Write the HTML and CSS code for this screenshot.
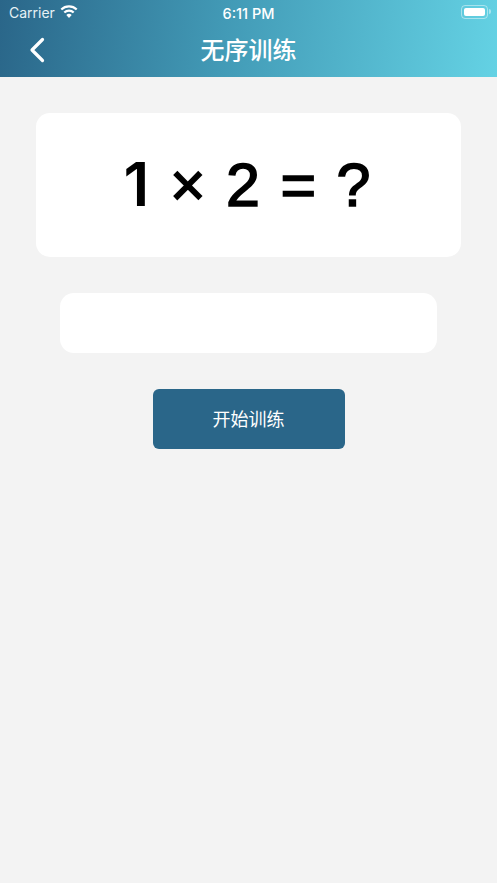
FILE: index.html
```html
<!DOCTYPE html>
<html lang="zh-CN">
<head>
    <meta charset="UTF-8">
    <meta name="viewport" content="width=device-width, initial-scale=1.0">
    <title>无序训练</title>
    <link rel="stylesheet" href="styles.css">
</head>
<body>
    <header class="top">
        <div class="status">
            <div class="status-left">
                <span class="carrier">Carrier</span>
                <svg class="wifi" viewBox="0 0 18 13" width="18" height="13">
                    <path d="M1.300 4.500a11 11 0 0 1 15.400 0" fill="none" stroke="#fff" stroke-width="2.200"/>
                    <path d="M4.300 7.500a6.800 6.800 0 0 1 9.400 0" fill="none" stroke="#fff" stroke-width="2.200"/>
                    <path d="M6.300 10.100a4 4 0 0 1 5.400 0L9 13z" fill="#fff"/>
                </svg>
            </div>
            <span class="time">6:11 PM</span>
            <div class="battery"><div class="battery-fill"></div></div>
        </div>
        <nav class="nav">
            <svg class="back" viewBox="0 0 16 26" width="16" height="26">
                <path d="M13.500 2.500 3 13l10.500 10.500" fill="none" stroke="#fff" stroke-width="3.200" stroke-linecap="round" stroke-linejoin="round"/>
            </svg>
            <h1>无序训练</h1>
        </nav>
    </header>

    <main class="content">
        <div class="question">
            <div class="equation"><span class="one">1</span> × 2 = ?</div>
        </div>
        <input class="answer" type="text">
        <button class="start">开始训练</button>
    </main>
</body>
</html>
```

FILE: styles.css
```css
* {
    box-sizing: border-box;
}
body {
    margin: 0;
    min-height: 883px;
    background-color: #f3f3f3;
    font-family: "Liberation Sans", "Noto Sans CJK SC", sans-serif;
}
.top {
    height: 77px;
    color: white;
    background: linear-gradient(97deg, #2a6689 0%, #429ab6 45%, #64d2e4 100%);
}
.status {
    height: 26px;
    padding: 0 9px;
    display: grid;
    grid-template-columns: 1fr auto 1fr;
    align-items: center;
    font-family: Inter, "Liberation Sans", sans-serif;
    font-size: 14.500px;
}
.status-left {
    display: flex;
    align-items: center;
    gap: 5px;
    font-size: 14px;
    color: #e6f1f5;
}
.carrier {
    margin-bottom: 2px;
}
.wifi {
    margin-top: -3px;
}
.time {
    font-weight: 500;
}
.battery {
    position: relative;
    justify-self: end;
    width: 27px;
    height: 14px;
    padding: 2px;
    border: 1px solid rgba(255, 255, 255, 0.45);
    border-radius: 4px;
    margin-top: -2px;
}
.battery::after {
    content: "";
    position: absolute;
    right: -4px;
    top: 3px;
    width: 2px;
    height: 5px;
    background-color: rgba(255, 255, 255, 0.45);
    border-radius: 0 2px 2px 0;
}
.battery-fill {
    height: 100%;
    background-color: white;
    border-radius: 2px;
}
.nav {
    height: 51px;
    display: flex;
    align-items: center;
    justify-content: center;
    position: relative;
}
.back {
    position: absolute;
    left: 29px;
    top: 11px;
}
.nav h1 {
    margin: 0 0 7px;
    font-size: 24px;
    font-weight: 500;
}
.content {
    display: flex;
    flex-direction: column;
    align-items: center;
    padding-top: 36px;
}
.question {
    width: 425px;
    height: 144px;
    background-color: white;
    border-radius: 14px;
    display: flex;
    align-items: center;
    justify-content: center;
    padding-right: 8px;
}
.equation {
    margin-bottom: 2px;
    font-size: 61px;
    line-height: 70px;
    word-spacing: 3.500px;
    color: black;
    -webkit-text-stroke: 1.600px black;
    white-space: nowrap;
}
.one {
    display: inline-block;
    width: 26px;
    margin-left: 5px;
    font-family: Inter, "Liberation Sans", sans-serif;
    font-weight: 600;
    -webkit-text-stroke: 0;
}
.answer {
    width: 377px;
    height: 60px;
    margin-top: 36px;
    background-color: white;
    border: none;
    border-radius: 14px;
}
.start {
    width: 192px;
    height: 60px;
    margin-top: 36px;
    padding: 0 0 3px;
    background-color: #2a6689;
    color: white;
    border: none;
    border-radius: 6px;
    font-family: inherit;
    font-size: 18px;
}
```
